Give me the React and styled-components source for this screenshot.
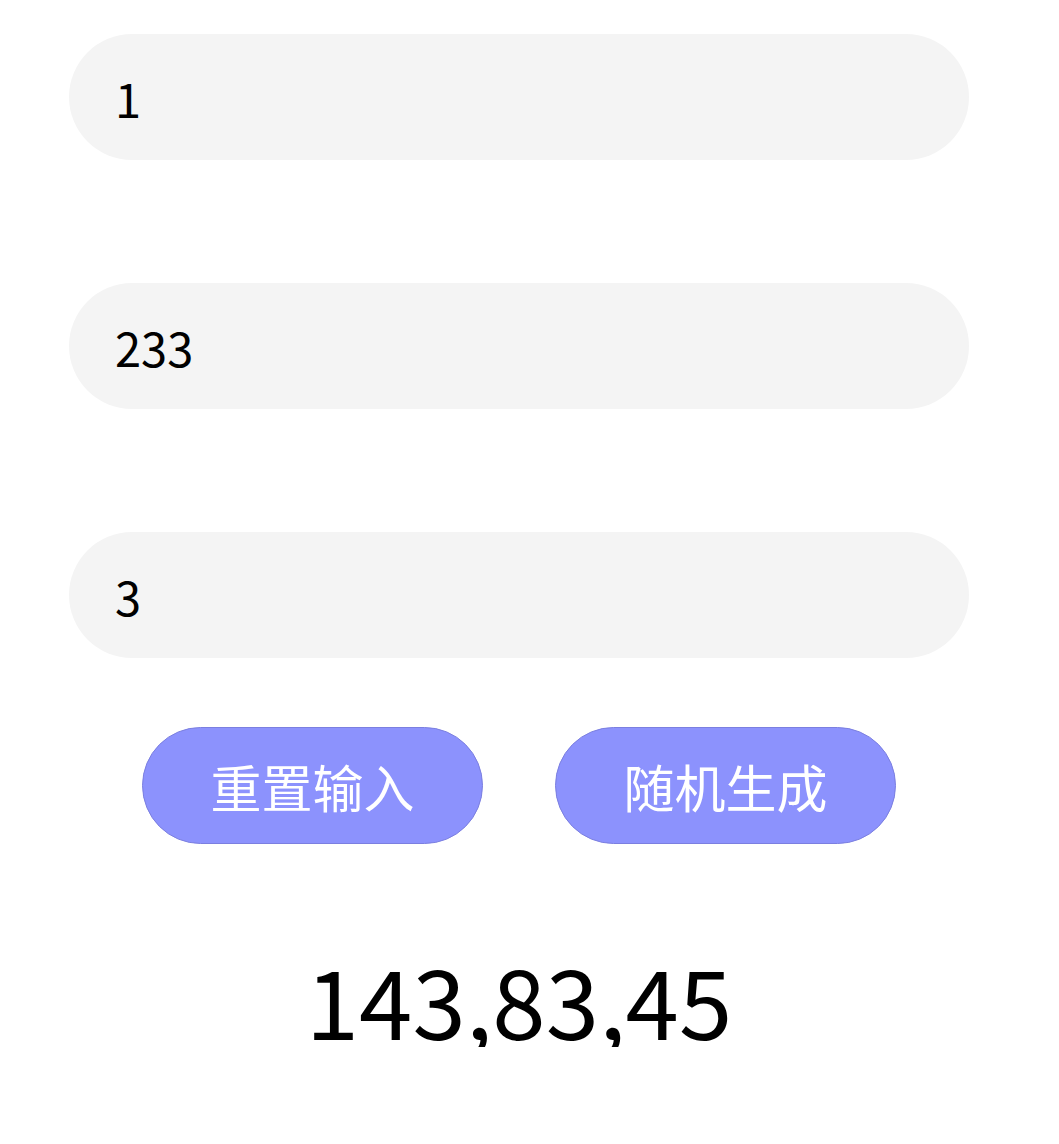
import React, { useState } from 'react'
import styled, { createGlobalStyle } from 'styled-components'

const Global = createGlobalStyle`
  body {
    margin: 0;
    background: #fff;
    font-family: "Noto Sans CJK SC", "Noto Sans", sans-serif;
  }
`

const Page = styled.div`
  width: 900px;
  margin-left: 69px;
  padding-top: 34px;
  display: flex;
  flex-direction: column;
`

const Fields = styled.div`
  display: flex;
  flex-direction: column;
  gap: 123px;
`

const Field = styled.input`
  box-sizing: border-box;
  width: 100%;
  height: 126px;
  border: none;
  outline: none;
  border-radius: 63px;
  background: #f4f4f4;
  padding: 0 46px;
  font-family: "Noto Sans CJK SC", "Noto Sans", sans-serif;
  font-size: 47px;
  color: #000;
`

const Actions = styled.div`
  display: flex;
  justify-content: center;
  gap: 72px;
  margin-top: 69px;
`

const Button = styled.button`
  box-sizing: border-box;
  width: 341px;
  height: 117px;
  border-radius: 59px;
  border: 1px solid #7b7fe0;
  background: #8c92fd;
  color: #fff;
  font-family: "Noto Sans CJK SC", sans-serif;
  font-size: 51px;
  padding: 0;
  cursor: pointer;
`

const Result = styled.div`
  margin-top: 107px;
  text-align: center;
  font-size: 96px;
  line-height: 1;
  color: #000;
`

export default function App() {
  const [values, setValues] = useState(['1', '233', '3'])
  const [result, setResult] = useState('143,83,45')

  const reset = () => {
    setValues(['', '', ''])
    setResult('')
  }

  const random = () => {
    const [a, b, c] = values.map(Number)
    const lo = Math.min(a || 0, b || 0)
    const hi = Math.max(a || 0, b || 0)
    const out = []
    for (let i = 0; i < (c || 0); i++) out.push(lo + Math.floor(Math.random() * (hi - lo + 1)))
    setResult(out.join(','))
  }

  return (
    <>
      <Global />
      <Page>
        <Fields>
          {values.map((v, i) => (
            <Field
              key={i}
              value={v}
              onChange={(e) => setValues(values.map((x, j) => (j === i ? e.target.value : x)))}
            />
          ))}
        </Fields>
        <Actions>
          <Button onClick={reset}>重置输入</Button>
          <Button onClick={random}>随机生成</Button>
        </Actions>
        <Result>{result}</Result>
      </Page>
    </>
  )
}
